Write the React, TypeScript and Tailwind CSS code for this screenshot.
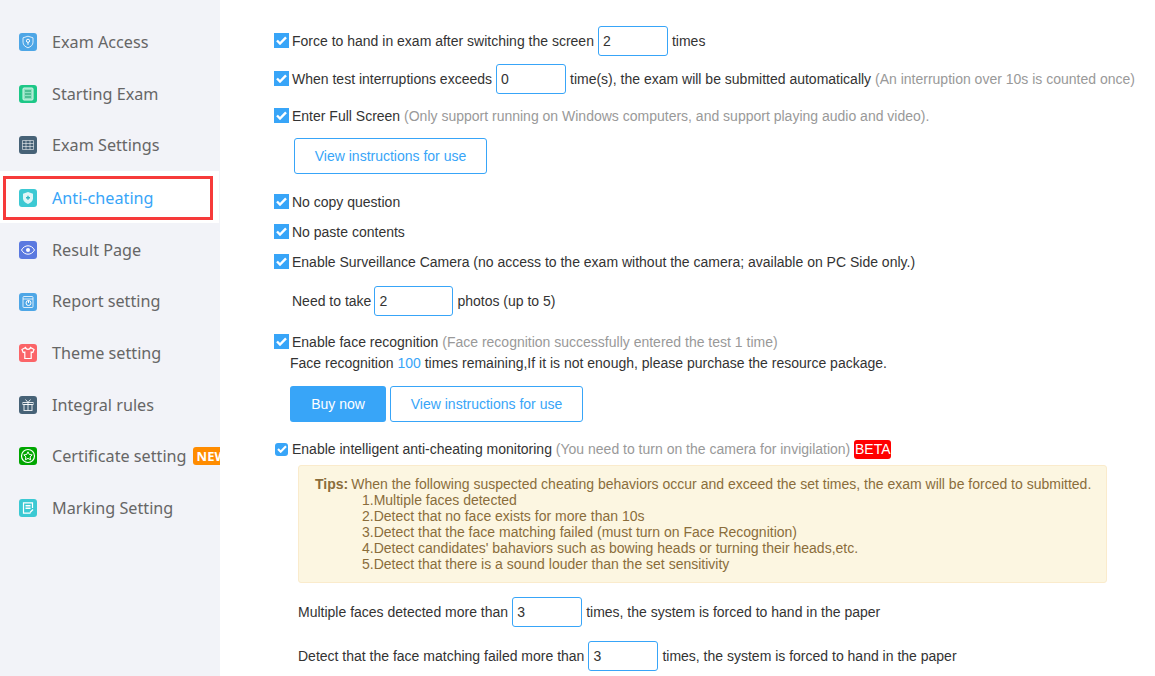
import type { ReactNode } from "react";

const IconBox = ({ color, children }: { color: string; children: ReactNode }) => (
  <svg width="18" height="18" viewBox="0 0 18 18" fill="none" stroke="#fff" strokeWidth="1" className="shrink-0">
    <rect width="18" height="18" rx="3" fill={color} stroke="none" />
    {children}
  </svg>
);

const menu = [
  {
    label: "Exam Access",
    icon: (
      <IconBox color="#4ea6e6">
        <path d="M9 3.2l5 1.6v4.4c0 2.8-2.2 4.600-5 5.600-2.800-1-5-2.800-5-5.600V4.800z" strokeOpacity=".8" />
        <circle cx="9" cy="7.800" r="1.600" />
        <path d="M9 9.400v2.400" />
      </IconBox>
    ),
  },
  {
    label: "Starting Exam",
    icon: (
      <IconBox color="#1dc787">
        <rect x="4" y="3" width="10" height="12" rx="1" fill="#8be0bf" stroke="#d8f5ea" />
        <path d="M6 6h6M6 9h6M6 12h6" stroke="#169e6b" />
      </IconBox>
    ),
  },
  {
    label: "Exam Settings",
    icon: (
      <IconBox color="#476277">
        <path d="M3.500 4.500h11v9h-11zM3.500 7.500h11M3.500 10.500h11M7 4.500v9M11 4.500v9" strokeOpacity=".55" />
      </IconBox>
    ),
  },
  {
    label: "Anti-cheating",
    active: true,
    icon: (
      <IconBox color="#3cc9d3">
        <path d="M9 3l5 1.800v4.400c0 2.800-2.200 4.600-5 5.800-2.800-1.200-5-3-5-5.800V4.800z" fill="#dff6f7" stroke="none" />
        <path d="M9 6.800v4M7 8.800h4" stroke="#2fb7c2" strokeWidth="1.400" />
      </IconBox>
    ),
  },
  {
    label: "Result Page",
    icon: (
      <IconBox color="#5b79e0">
        <path d="M2.500 9c1.600-2.800 3.800-4.200 6.500-4.200s4.900 1.400 6.500 4.200c-1.600 2.800-3.800 4.200-6.500 4.200S4.100 11.800 2.500 9z" />
        <circle cx="9" cy="9" r="2" fill="#fff" stroke="none" />
      </IconBox>
    ),
  },
  {
    label: "Report setting",
    icon: (
      <IconBox color="#4ea6e6">
        <rect x="4" y="3.500" width="10" height="11" rx="1" strokeOpacity=".8" />
        <path d="M4 6h10" strokeOpacity=".8" />
        <circle cx="9.500" cy="10" r="2.500" />
        <path d="M9.500 10V7.500" />
      </IconBox>
    ),
  },
  {
    label: "Theme setting",
    icon: (
      <IconBox color="#fb6468">
        <path d="M6.500 3.500L3 5.500l1.200 3 1.600-.5v6.500h6.400V8l1.600.5 1.200-3-3.500-2c-.3 1.200-1.200 1.800-2.500 1.800S6.800 4.700 6.500 3.500z" strokeWidth="1.200" />
      </IconBox>
    ),
  },
  {
    label: "Integral rules",
    icon: (
      <IconBox color="#476277">
        <rect x="4" y="6.500" width="10" height="2" strokeOpacity=".85" />
        <rect x="5" y="8.500" width="8" height="6" strokeOpacity=".85" />
        <path d="M9 6.500v8M6.500 3.500L9 6.500l2.500-3" strokeOpacity=".85" />
      </IconBox>
    ),
  },
  {
    label: "Certificate setting",
    badge: true,
    icon: (
      <IconBox color="#00a600">
        <circle cx="9" cy="9" r="6.500" strokeWidth="1.200" />
        <path d="M9 4.800l1.300 2.700 2.900.4-2.100 2 .5 2.900L9 11.400l-2.600 1.400.5-2.900-2.100-2 2.900-.4z" />
      </IconBox>
    ),
  },
  {
    label: "Marking Setting",
    icon: (
      <IconBox color="#3cc9d3">
        <path d="M13.500 9V3.800h-9v10.400h7" strokeWidth="1.200" />
        <path d="M6.500 6.800h5M6.500 9.200h5" strokeWidth="1.400" />
        <path d="M11 13.500l3-3" strokeWidth="1.200" />
      </IconBox>
    ),
  },
];

function Check() {
  return (
    <span className="flex h-[15px] w-[15px] shrink-0 -translate-y-px items-center justify-center bg-[#38a5f8]">
      <svg width="11" height="9" viewBox="0 0 11 9" fill="none" stroke="#fff" strokeWidth="2.400">
        <path d="M1 4.500l3 3 6-6.200" />
      </svg>
    </span>
  );
}

function Num({ value, width = "w-[70px]" }: { value: string; width?: string }) {
  return (
    <span className={`flex h-[30px] ${width} items-center rounded-[3px] border border-[#38a5f8] bg-white px-[4px] text-[#333]`}>
      {value}
    </span>
  );
}

const Hint = ({ children }: { children: ReactNode }) => <span className="text-[#999]">{children}</span>;

function OutlineBtn({ className }: { className: string }) {
  return (
    <button type="button" className={`h-9 rounded-[3px] border border-[#38a5f8] bg-white text-[14px] text-[#38a5f8] ${className}`}>
      View instructions for use
    </button>
  );
}

export default function App() {
  return (
    <div className="flex h-[676px] w-[1155px] overflow-hidden bg-white font-['Liberation_Sans',Arial,sans-serif] text-[14px] text-[#333]">
      <aside className="h-full w-[220px] shrink-0 overflow-hidden bg-[#f2f3f8] pt-[16.400px] font-['Noto_Sans',sans-serif] text-[16.200px] text-[#666]">
        {menu.map((item) =>
          item.active ? (
            <div key={item.label} className="mb-px h-[52px] w-[219px] bg-white pl-[3px] pt-[5px]">
              <div className="flex h-[44px] w-[210px] items-center gap-[15px] border-[3px] border-[#f63a3a] pl-[13px] text-[#38a5f8]">
                {item.icon}
                <span>{item.label}</span>
              </div>
            </div>
          ) : (
            <div key={item.label} className="flex h-[51.600px] items-center gap-[15px] whitespace-nowrap pl-[19px]">
              {item.icon}
              <span>{item.label}</span>
              {item.badge && (
                <span className="-ml-[9px] rounded-[3px] bg-[#ff8c00] px-[4px] text-[13px] leading-[18px] font-bold text-white">NEW</span>
              )}
            </div>
          ),
        )}
      </aside>

      <main className="min-w-0 flex-1 pl-[54px] pt-[26px]">
        <div className="flex h-[30px] items-center gap-[3px]">
          <Check />
          <span className="mr-px">Force to hand in exam after switching the screen</span>
          <Num value="2" />
          <span className="ml-px">times</span>
        </div>
        <div className="mt-2 flex h-[30px] items-center gap-[3px] whitespace-nowrap">
          <Check />
          <span className="mr-px">When test interruptions exceeds</span>
          <Num value="0" />
          <span className="ml-px">
            time(s), the exam will be submitted automatically <Hint>(An interruption over 10s is counted once)</Hint>
          </span>
        </div>
        <div className="mt-[7px] flex h-[30px] items-center gap-[3px]">
          <Check />
          <span>
            Enter Full Screen <Hint>(Only support running on Windows computers, and support playing audio and video).</Hint>
          </span>
        </div>
        <OutlineBtn className="ml-[20px] mt-[7px] w-[193px]" />
        <div className="mt-[13px] flex h-[30px] items-center gap-[3px]">
          <Check />
          <span>No copy question</span>
        </div>
        <div className="flex h-[30px] items-center gap-[3px]">
          <Check />
          <span>No paste contents</span>
        </div>
        <div className="flex h-[30px] items-center gap-[3px]">
          <Check />
          <span>Enable Surveillance Camera (no access to the exam without the camera; available on PC Side only.)</span>
        </div>
        <div className="ml-[18px] mt-[9px] flex h-[30px] items-center gap-[3px]">
          <span>Need to take</span>
          <Num value="2" width="w-[79px]" />
          <span className="ml-px">photos (up to 5)</span>
        </div>
        <div className="mt-4 flex h-5 items-center gap-[3px]">
          <Check />
          <span>
            Enable face recognition <Hint>(Face recognition successfully entered the test 1 time)</Hint>
          </span>
        </div>
        <p className="ml-4 h-[22px] leading-[22px]">
          Face recognition <span className="text-[#38a5f8]">100</span> times remaining,If it is not enough, please purchase the resource package.
        </p>
        <div className="ml-4 mt-3 flex gap-1">
          <button type="button" className="h-9 w-[96px] rounded-[3px] bg-[#38a5f8] text-[14px] text-white">
            Buy now
          </button>
          <OutlineBtn className="w-[193px]" />
        </div>
        <div className="ml-px mt-[17px] flex h-5 items-center gap-1">
          <span className="flex h-[13px] w-[13px] shrink-0 items-center justify-center rounded-[3px] bg-[#38a5f8]">
            <svg width="10" height="8" viewBox="0 0 11 9" fill="none" stroke="#fff" strokeWidth="2.400">
              <path d="M1 4.500l3 3 6-6.200" />
            </svg>
          </span>
          <span>
            Enable intelligent anti-cheating monitoring <Hint>(You need to turn on the camera for invigilation)</Hint>
          </span>
          <span className="w-[37px] rounded-[3px] bg-[#ff0000] text-center leading-[19px] whitespace-nowrap text-white">BETA</span>
        </div>
        <div className="ml-6 mt-[6px] h-[118px] w-[809px] rounded-[3px] border border-[#faebcc] bg-[#fcf6e1] pl-4 pt-[10px] leading-4 text-[#8a6d3b]">
          <p>
            <b className="mr-[3px]">Tips:</b>
            When the following suspected cheating behaviors occur and exceed the set times, the exam will be forced to submitted.
          </p>
          <div className="pl-[47px]">
            <p>1.Multiple faces detected</p>
            <p>2.Detect that no face exists for more than 10s</p>
            <p>3.Detect that the face matching failed (must turn on Face Recognition)</p>
            <p>4.Detect candidates' bahaviors such as bowing heads or turning their heads,etc.</p>
            <p>5.Detect that there is a sound louder than the set sensitivity</p>
          </div>
        </div>
        <div className="ml-6 mt-[14px] flex h-[30px] items-center gap-1">
          <span>Multiple faces detected more than</span>
          <Num value="3" />
          <span>times, the system is forced to hand in the paper</span>
        </div>
        <div className="ml-6 mt-[14px] flex h-[30px] items-center gap-1">
          <span>Detect that the face matching failed more than</span>
          <Num value="3" />
          <span>times, the system is forced to hand in the paper</span>
        </div>
      </main>
    </div>
  );
}
